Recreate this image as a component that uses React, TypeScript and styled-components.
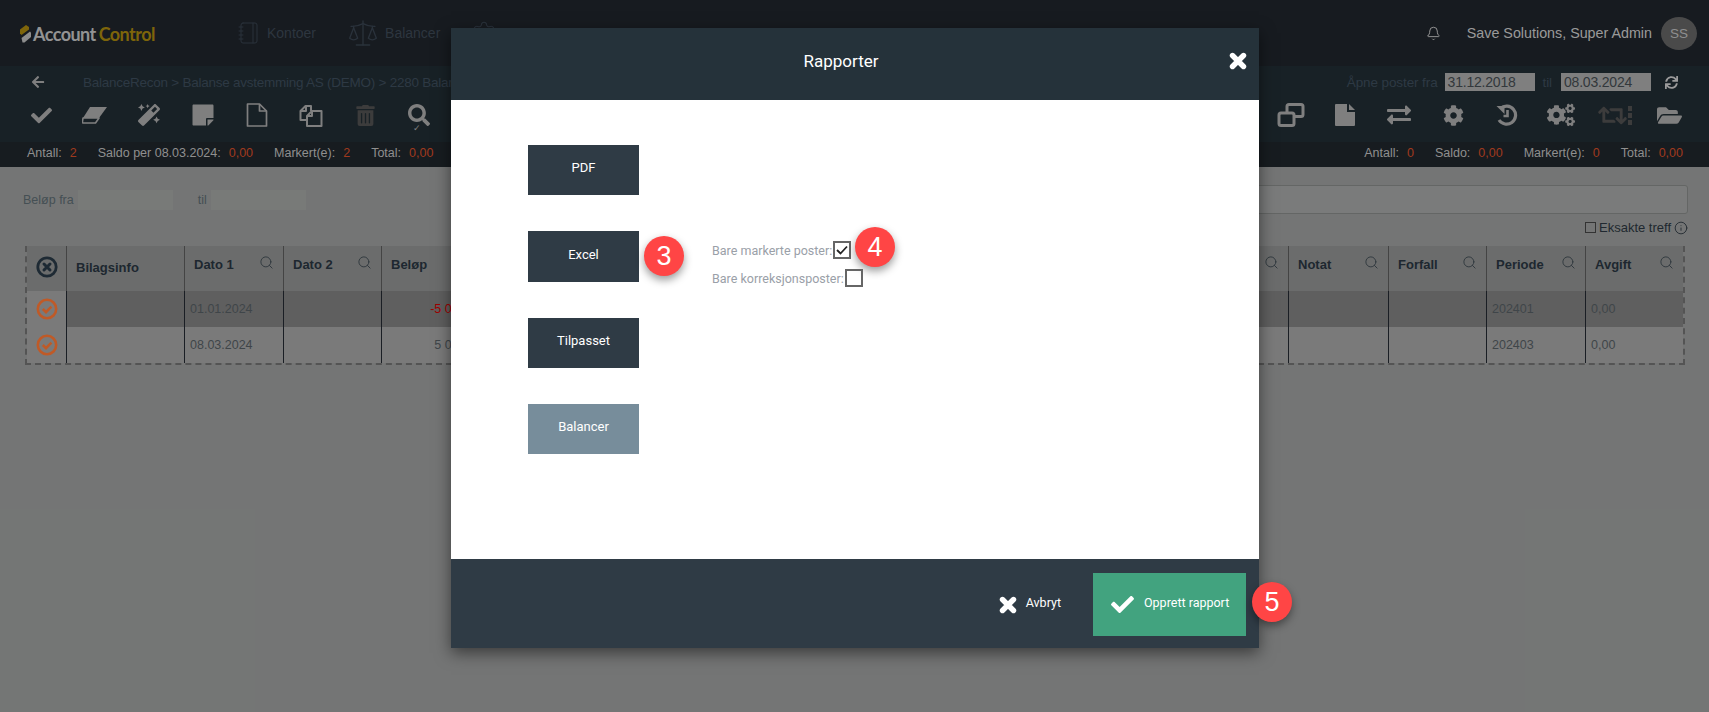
import React from 'react';
import styled, { createGlobalStyle } from 'styled-components';
import {
  FaArrowLeft, FaCheck, FaCog, FaCogs, FaExchangeAlt, FaFolderOpen,
  FaMagic, FaRetweet, FaSearch, FaStickyNote, FaSync, FaTrashAlt,
} from 'react-icons/fa';
import { Bell, Info, Notebook, Scale, Search, Settings } from 'lucide-react';

const GlobalStyle = createGlobalStyle`
  html, body { margin: 0; padding: 0; }
  body { font-family: "Liberation Sans", Arial, sans-serif; background: #9b9d9c; }
  * { box-sizing: border-box; }
`;

const COLUMNS = '40px 118px 99px 98px 108px 1fr 100px 98px 99px 97px';

const EraserIcon = () => (
  <svg width="26" height="18" viewBox="0 0 26 18">
    <path d="M8 1h17l-8 11H1z" fill="currentColor" />
    <path d="M1 12h16l-3.5 5H1.5a1 1 0 0 1-1-1.5z" fill="none" stroke="currentColor" strokeWidth="1.6" strokeLinejoin="round" />
  </svg>
);

const FileOutlineIcon = () => (
  <svg width="22" height="24" viewBox="0 0 22 24" fill="none" stroke="currentColor" strokeWidth="1.7" strokeLinejoin="round">
    <path d="M1.5 1h12l7 7v15h-19z" />
    <path d="M13.5 1v7h7" />
  </svg>
);

const FileSolidIcon = () => (
  <svg width="22" height="24" viewBox="0 0 22 24" fill="currentColor">
    <path d="M1 2a1 1 0 0 1 1-1h11v8h8v13a1 1 0 0 1-1 1H2a1 1 0 0 1-1-1z" />
    <path d="M15 1l6 6h-6z" />
  </svg>
);

const CopyIcon = () => (
  <svg width="24" height="23" viewBox="0 0 24 23" fill="none" stroke="currentColor" strokeWidth="2" strokeLinejoin="round">
    <path d="M8 16H1.5V7L6.5 2H12v5" />
    <path d="M7 2v5H1.5" />
    <path d="M8 22V12l5-5h9.5v15z" />
    <path d="M13 7v5H8" />
  </svg>
);

const CloneIcon = () => (
  <svg width="28" height="24" viewBox="0 0 28 24" fill="none" stroke="currentColor" strokeWidth="3" strokeLinejoin="round">
    <rect x="2" y="10" width="15" height="12.5" rx="2" />
    <path d="M10 10V3.5a2 2 0 0 1 2-2h12a2 2 0 0 1 2 2v8a2 2 0 0 1-2 2h-7" />
  </svg>
);

const HistoryIcon = () => (
  <svg width="22" height="22" viewBox="0 0 22 22" fill="none" stroke="currentColor">
    <path d="M4.5 4.5A9 9 0 1 1 3 16" strokeWidth="3.2" />
    <path d="M0.5 2h8v8z" fill="currentColor" stroke="none" />
    <path d="M11.5 6v6H7.5" strokeWidth="2.6" />
  </svg>
);

const FatCross = ({ size }: { size: number }) => (
  <svg width={size} height={size} viewBox="0 0 18 18" stroke="currentColor" strokeWidth="5.4" strokeLinecap="round">
    <path d="M3.5 3.5l11 11M14.5 3.5l-11 11" />
  </svg>
);

const CircleCross = () => (
  <svg width="22" height="22" viewBox="0 0 22 22" fill="none" stroke="#293946">
    <circle cx="11" cy="11" r="9.2" strokeWidth="2.8" />
    <path d="M8 8l6 6M14 8l-6 6" strokeWidth="3" strokeLinecap="round" />
  </svg>
);

const CircleCheck = () => (
  <svg width="22" height="22" viewBox="0 0 22 22" fill="none" stroke="#ff7835">
    <circle cx="11" cy="11" r="9.2" strokeWidth="2.6" />
    <path d="M6.8 11l3.2 3.2 5.4-5.6" strokeWidth="2.6" />
  </svg>
);

const LogoMark = () => (
  <svg width="11" height="18" viewBox="0 0 11 18">
    <path d="M0 4.5L6 0l3 2v2.5L1.5 10 0 8.5z" fill="#a8870e" />
    <path d="M1.5 13L10 6.5l1 1V12l-6.5 5.5H2.5z" fill="#bdbdbd" />
  </svg>
);

const CheckMark = () => (
  <svg width="12" height="10" viewBox="0 0 12 10" fill="none" stroke="#222" strokeWidth="1.8">
    <path d="M1 5l3.5 3.5L11 1.5" />
  </svg>
);

export default function App() {
  return (
    <Page>
      <GlobalStyle />
      <TopBar>
        <Logo>
          <LogoMark />
          <LogoWord>
            Account<Gold>Control</Gold>
          </LogoWord>
        </Logo>
        <Nav>
          <NavItem><Notebook size={24} strokeWidth={1} />Kontoer</NavItem>
          <NavItem><Scale size={32} strokeWidth={1} />Balancer</NavItem>
          <NavItem><Settings size={26} strokeWidth={1} /></NavItem>
        </Nav>
        <UserArea>
          <Bell size={15} strokeWidth={1.5} />
          <UserName>Save Solutions, Super Admin</UserName>
          <Avatar>SS</Avatar>
        </UserArea>
      </TopBar>

      <Toolbar>
        <CrumbRow>
          <BackIcon><FaArrowLeft size={14} /></BackIcon>
          <Crumbs>BalanceRecon &gt; Balanse avstemming AS (DEMO) &gt; 2280 Balanse</Crumbs>
          <DateRange>
            Åpne poster fra
            <DateInput>31.12.2018</DateInput>
            <DateSep>til</DateSep>
            <DateInput>08.03.2024</DateInput>
            <RefreshIcon><FaSync size={13} /></RefreshIcon>
          </DateRange>
        </CrumbRow>
        <IconRow>
          <ToolIcon><FaCheck size={21} /></ToolIcon>
          <ToolIcon><EraserIcon /></ToolIcon>
          <ToolIcon><FaMagic size={22} /></ToolIcon>
          <ToolIcon><FaStickyNote size={24} /></ToolIcon>
          <ToolIcon><FileOutlineIcon /></ToolIcon>
          <ToolIcon><CopyIcon /></ToolIcon>
          <ToolIcon $disabled><FaTrashAlt size={21} /></ToolIcon>
          <ToolIcon>
            <FaSearch size={22} />
            <SearchTick>✓</SearchTick>
          </ToolIcon>
          <IconSpacer />
          <ToolIcon><CloneIcon /></ToolIcon>
          <ToolIcon><FileSolidIcon /></ToolIcon>
          <ToolIcon><FaExchangeAlt size={24} /></ToolIcon>
          <ToolIcon><FaCog size={21} /></ToolIcon>
          <ToolIcon><HistoryIcon /></ToolIcon>
          <ToolIcon><FaCogs size={28} /></ToolIcon>
          <ToolIcon $disabled>
            <FaRetweet size={29} />
            <RetweetDots><i /><i /><i /></RetweetDots>
          </ToolIcon>
          <ToolIcon><FaFolderOpen size={25} /></ToolIcon>
        </IconRow>
      </Toolbar>

      <StatsBar>
        <StatsGroup>
          <Stat>Antall:<StatValue>2</StatValue></Stat>
          <Stat>Saldo per 08.03.2024:<StatValue>0,00</StatValue></Stat>
          <Stat>Markert(e):<StatValue>2</StatValue></Stat>
          <Stat>Total:<StatValue>0,00</StatValue></Stat>
        </StatsGroup>
        <StatsGroup>
          <Stat>Antall:<StatValue>0</StatValue></Stat>
          <Stat>Saldo:<StatValue>0,00</StatValue></Stat>
          <Stat>Markert(e):<StatValue>0</StatValue></Stat>
          <Stat>Total:<StatValue>0,00</StatValue></Stat>
        </StatsGroup>
      </StatsBar>

      <Content>
        <FilterBar>
          <AmountFilter>
            Beløp fra<AmountInput />
            <AmountTil>til</AmountTil><AmountInput />
          </AmountFilter>
          <SearchBox />
        </FilterBar>
        <ExactRow>
          <ExactBox />
          Eksakte treff
          <Info size={14} strokeWidth={1.5} />
        </ExactRow>

        <Table>
          <HeadRow>
            <HeadCell $center><CircleCross /></HeadCell>
            <HeadCell $low>Bilagsinfo</HeadCell>
            <HeadCell>Dato 1<HeadSearch /></HeadCell>
            <HeadCell>Dato 2<HeadSearch /></HeadCell>
            <HeadCell>Beløp</HeadCell>
            <HeadCell><HeadSearch /></HeadCell>
            <HeadCell>Notat<HeadSearch /></HeadCell>
            <HeadCell>Forfall<HeadSearch /></HeadCell>
            <HeadCell>Periode<HeadSearch /></HeadCell>
            <HeadCell>Avgift<HeadSearch /></HeadCell>
          </HeadRow>
          <BodyRow $selected>
            <CheckCell><CircleCheck /></CheckCell>
            <Cell />
            <Cell>01.01.2024</Cell>
            <Cell />
            <Cell $amount $negative>-5 000,00</Cell>
            <Cell />
            <Cell />
            <Cell />
            <Cell>202401</Cell>
            <Cell>0,00</Cell>
          </BodyRow>
          <BodyRow>
            <CheckCell><CircleCheck /></CheckCell>
            <Cell />
            <Cell>08.03.2024</Cell>
            <Cell />
            <Cell $amount>5 000,00</Cell>
            <Cell />
            <Cell />
            <Cell />
            <Cell>202403</Cell>
            <Cell>0,00</Cell>
          </BodyRow>
        </Table>
      </Content>

      <Overlay />

      <Modal>
        <ModalHeader>
          <ModalTitle>Rapporter</ModalTitle>
          <CloseIcon><FatCross size={18} /></CloseIcon>
        </ModalHeader>
        <ModalBody>
          <ReportRow><ReportButton>PDF</ReportButton></ReportRow>
          <ReportRow>
            <ReportButton $tall>Excel</ReportButton>
            <StepBadge $left={116} $top={5}>3</StepBadge>
            <Options>
              <OptionLine>
                Bare markerte poster:<OptionBox><CheckMark /></OptionBox>
                <StepBadge $left={143} $top={-14}>4</StepBadge>
              </OptionLine>
              <OptionLine>
                Bare korreksjonsposter:<OptionBox />
              </OptionLine>
            </Options>
          </ReportRow>
          <ReportRow><ReportButton>Tilpasset</ReportButton></ReportRow>
          <ReportRow><ReportButton $muted>Balancer</ReportButton></ReportRow>
        </ModalBody>
        <ModalFooter>
          <CancelButton><FatCross size={18} /><ButtonLabel>Avbryt</ButtonLabel></CancelButton>
          <ConfirmButton>
            <FaCheck size={23} /><ButtonLabel>Opprett rapport</ButtonLabel>
            <StepBadge $left={159} $top={9}>5</StepBadge>
          </ConfirmButton>
        </ModalFooter>
      </Modal>
    </Page>
  );
}

const Page = styled.div`
  position: relative;
  width: 1709px;
  height: 712px;
  overflow: hidden;
  background: #9b9d9c;
`;

const TopBar = styled.header`
  display: flex;
  align-items: center;
  height: 66px;
  padding: 0 12px 0 20px;
  background: #1f242b;
`;

const Logo = styled.div`
  display: flex;
  align-items: center;
  gap: 2px;
  width: 217px;
  margin-top: 2px;
`;

const LogoWord = styled.span`
  font-family: "Lato", sans-serif;
  font-size: 18px;
  font-weight: 700;
  letter-spacing: -0.55px;
  color: #c4c4c4;
`;

const Gold = styled.span`
  margin-left: 3px;
  color: #a8870e;
`;

const Nav = styled.nav`
  display: flex;
  align-items: center;
  gap: 31px;
`;

const NavItem = styled.div`
  display: flex;
  align-items: center;
  gap: 6px;
  font-size: 14px;
  color: #3d4855;

  svg { color: #38434f; }
`;

const UserArea = styled.div`
  display: flex;
  align-items: center;
  margin-left: auto;
  color: #cdcdcd;
`;

const UserName = styled.span`
  margin: 0 9px 0 26px;
  font-size: 14.3px;
`;

const Avatar = styled.div`
  display: flex;
  align-items: center;
  justify-content: center;
  width: 36px;
  height: 33px;
  border-radius: 50%;
  background: #636363;
  font-size: 13.5px;
  color: #bfbfbf;
`;

const Toolbar = styled.div`
  height: 76px;
  background: #212c33;
`;

const CrumbRow = styled.div`
  display: flex;
  align-items: center;
  height: 32px;
  padding: 0 31px;
`;

const BackIcon = styled.span`
  display: flex;
  width: 52px;
  color: #aaaaaa;
`;

const Crumbs = styled.span`
  font-size: 13.5px;
  letter-spacing: -0.25px;
  color: #3d4d5b;
`;

const DateRange = styled.div`
  display: flex;
  align-items: center;
  margin-left: auto;
  font-size: 13.5px;
  letter-spacing: -0.1px;
  color: #3d4d5b;
`;

const DateInput = styled.span`
  width: 90px;
  height: 18px;
  margin-left: 7px;
  padding-left: 3px;
  background: #aaaaaa;
  font-size: 14px;
  letter-spacing: -0.2px;
  line-height: 18px;
  color: #444b50;
`;

const DateSep = styled.span`
  margin-left: 8px;
  margin-right: 2px;
`;

const RefreshIcon = styled.span`
  display: flex;
  margin-left: 14px;
  color: #cfcfcf;
`;

const IconRow = styled.div`
  display: flex;
  align-items: center;
  height: 34px;
  padding: 0 13px 0 14px;
`;

const IconSpacer = styled.div`
  flex: 1;
`;

const ToolIcon = styled.span<{ $disabled?: boolean }>`
  position: relative;
  display: flex;
  align-items: center;
  justify-content: center;
  width: 54px;
  color: ${(p) => (p.$disabled ? '#505050' : '#aaaaaa')};
`;

const SearchTick = styled.span`
  position: absolute;
  left: 21px;
  top: 19px;
  font-size: 9px;
  color: #aaaaaa;
`;

const RetweetDots = styled.span`
  display: flex;
  flex-direction: column;
  gap: 2px;
  margin-left: 1px;

  i {
    display: block;
    width: 4px;
    height: 5px;
    background: #505050;
  }
`;

const StatsBar = styled.div`
  display: flex;
  justify-content: space-between;
  align-items: center;
  height: 25px;
  padding: 0 26px 3px 27px;
  background: #1f262b;
`;

const StatsGroup = styled.div`
  display: flex;
  gap: 21px;
`;

const Stat = styled.span`
  font-size: 12.5px;
  color: #bfbfbf;
`;

const StatValue = styled.span`
  margin-left: 8px;
  color: #d54d28;
`;

const Content = styled.main`
  display: flex;
  flex-direction: column;
`;

const FilterBar = styled.div`
  display: flex;
  align-items: center;
  justify-content: space-between;
  padding: 18px 21px 0 23px;
`;

const AmountFilter = styled.div`
  display: flex;
  align-items: center;
  font-size: 12.5px;
  color: #5c6a71;
`;

const AmountInput = styled.span`
  width: 95px;
  height: 20px;
  margin-left: 4px;
  background: #a0a3a1;
`;

const AmountTil = styled.span`
  margin-left: 25px;
`;

const SearchBox = styled.div`
  width: 1000px;
  height: 29px;
  border: 1px solid #868887;
  border-radius: 3px;
  background: #a3a5a4;
`;

const ExactRow = styled.div`
  display: flex;
  align-items: center;
  justify-content: flex-end;
  gap: 3px;
  height: 17px;
  margin: 5px 21px 0 0;
  font-size: 13px;
  color: #2b3640;
`;

const ExactBox = styled.span`
  width: 11px;
  height: 11px;
  border: 1px solid #444;
`;

const Table = styled.div`
  margin: 10px 24px 0 25px;
  border: 2px dashed #717171;
  border-top: 0;
`;

const HeadRow = styled.div`
  display: grid;
  grid-template-columns: ${COLUMNS};
  height: 45px;
  background: #8f9190;
`;

const HeadCell = styled.div<{ $center?: boolean; $low?: boolean }>`
  position: relative;
  display: flex;
  align-items: ${(p) => (p.$center ? 'center' : 'flex-start')};
  justify-content: ${(p) => (p.$center ? 'center' : 'flex-start')};
  padding: ${(p) => (p.$center ? '0 0 3px' : p.$low ? '14px 0 0 9px' : '11px 0 0 9px')};
  border-right: 1px solid #5b5b5b;
  font-size: 13px;
  font-weight: 700;
  color: #293540;

  &:last-child { border-right: 0; }
`;

const HeadSearch = styled(Search).attrs({ size: 15, strokeWidth: 1.5 })`
  position: absolute;
  right: 9px;
  top: 9px;
  color: #3f4a52;
`;

const BodyRow = styled.div<{ $selected?: boolean }>`
  display: grid;
  grid-template-columns: ${COLUMNS};
  height: 36px;
  background: ${(p) => (p.$selected ? '#7f7f7f' : '#a3a3a3')};
`;

const Cell = styled.div<{ $amount?: boolean; $negative?: boolean }>`
  display: flex;
  align-items: center;
  justify-content: ${(p) => (p.$amount ? 'flex-end' : 'flex-start')};
  padding: ${(p) => (p.$amount ? '0 6px 0 0' : '0 0 0 5px')};
  border-right: 1px solid #232931;
  font-size: 12.5px;
  color: ${(p) => (p.$negative ? '#d50000' : '#555d62')};

  &:last-child { border-right: 0; }
`;

const CheckCell = styled(Cell)`
  justify-content: center;
  padding: 0;
  background: #a3a3a3;
`;

const Overlay = styled.div`
  position: absolute;
  inset: 0;
  background: rgba(0, 0, 0, 0.25);
`;

const Modal = styled.section`
  position: absolute;
  top: 28px;
  left: 451px;
  display: flex;
  flex-direction: column;
  width: 808px;
  height: 620px;
  background: #fff;
  box-shadow: 0 5px 15px rgba(0, 0, 0, 0.5);
  font-family: "Roboto", sans-serif;
`;

const ModalHeader = styled.div`
  position: relative;
  display: flex;
  align-items: center;
  justify-content: center;
  height: 72px;
  padding: 0 28px 6px 0;
  background: #25323a;
  color: #fff;
`;

const ModalTitle = styled.h2`
  margin: 0;
  font-size: 17px;
  font-weight: 400;
`;

const CloseIcon = styled.span`
  position: absolute;
  right: 12px;
  top: 24px;
  display: flex;
`;

const ModalBody = styled.div`
  display: flex;
  flex-direction: column;
  gap: 36px;
  flex: 1;
  padding: 45px 0 0 77px;
`;

const ReportRow = styled.div`
  position: relative;
  display: flex;
`;

const ReportButton = styled.div<{ $muted?: boolean; $tall?: boolean }>`
  display: flex;
  align-items: center;
  justify-content: center;
  width: 111px;
  height: ${(p) => (p.$tall ? '51px' : '50px')};
  padding-bottom: 5px;
  background: ${(p) => (p.$muted ? '#778d9b' : '#2f3b45')};
  font-size: 13px;
  font-weight: 400;
  color: #fff;
`;

const StepBadge = styled.span<{ $left: number; $top: number }>`
  position: absolute;
  left: ${(p) => p.$left}px;
  top: ${(p) => p.$top}px;
  display: flex;
  align-items: center;
  justify-content: center;
  width: 40px;
  height: 40px;
  border-radius: 50%;
  background: #ff4545;
  box-shadow: 0 4px 8px rgba(0, 0, 0, 0.4);
  font-family: "Liberation Sans", Arial, sans-serif;
  font-size: 27px;
  font-weight: 400;
  color: #fff;
`;

const Options = styled.div`
  display: flex;
  flex-direction: column;
  gap: 10px;
  margin: 10px 0 -5px 73px;
`;

const OptionLine = styled.label`
  position: relative;
  display: flex;
  align-items: center;
  height: 18px;
  font-size: 12.5px;
  color: #9aa0a8;
`;

const OptionBox = styled.span`
  display: flex;
  align-items: center;
  justify-content: center;
  width: 18px;
  height: 18px;
  margin-left: 1px;
  border: 2px solid #666;
`;

const ModalFooter = styled.div`
  display: flex;
  justify-content: flex-end;
  gap: 19px;
  height: 89px;
  padding: 14px 13px 0;
  background: #2f3b45;
`;

const ButtonLabel = styled.span`
  padding-bottom: 5px;
`;

const CancelButton = styled.div`
  display: flex;
  align-items: center;
  gap: 9px;
  height: 63px;
  padding-right: 13px;
  font-size: 12.5px;
  color: #fff;
`;

const ConfirmButton = styled.div`
  position: relative;
  display: flex;
  align-items: center;
  gap: 10px;
  width: 153px;
  height: 63px;
  padding-left: 18px;
  background: #42a37f;
  font-size: 12.5px;
  color: #fff;
`;
